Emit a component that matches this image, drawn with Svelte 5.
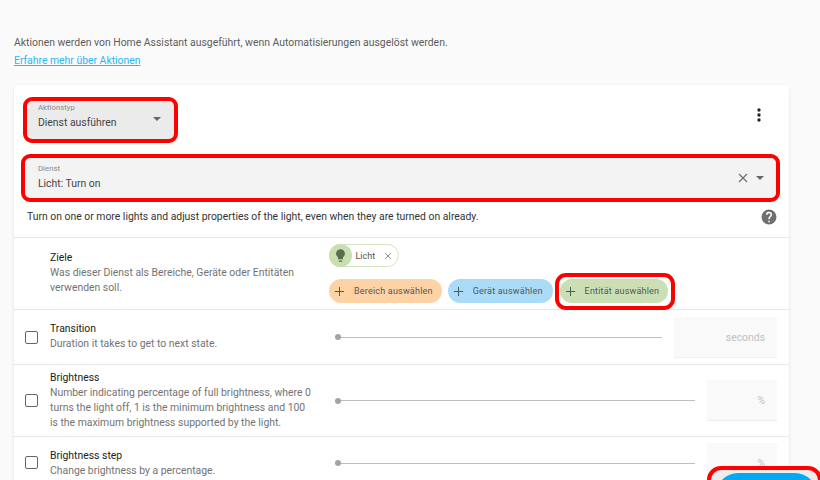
<script>
  const rows = [
    { name: "Transition", desc: "Duration it takes to get to next state.", unit: "seconds", wide: true, cls: "r-transition" },
    { name: "Brightness", desc: "Number indicating percentage of full brightness, where 0 turns the light off, 1 is the minimum brightness and 100 is the maximum brightness supported by the light.", unit: "%", cls: "r-brightness" },
    { name: "Brightness step", desc: "Change brightness by a percentage.", unit: "%", cls: "r-step" }
  ];
  const pickers = [
    { label: "Bereich auswählen", cls: "orange" },
    { label: "Gerät auswählen", cls: "blue" },
    { label: "Entität auswählen", cls: "green" }
  ];
</script>

<div class="page">
  <p class="intro">Aktionen werden von Home Assistant ausgeführt, wenn Automatisierungen ausgelöst werden.</p>
  <a class="learn" href="#top">Erfahre mehr über Aktionen</a>

  <div class="card">
    <div class="head">
      <div class="field type mark">
        <div class="field-text">
          <span class="float">Aktionstyp</span>
          <span class="value">Dienst ausführen</span>
        </div>
        <span class="caret"></span>
      </div>
      <svg class="dots" viewBox="0 0 24 24" width="20" height="20"><path fill="#212121" d="M12 16a2 2 0 1 1 0 4 2 2 0 0 1 0-4zm0-6a2 2 0 1 1 0 4 2 2 0 0 1 0-4zm0-6a2 2 0 1 1 0 4 2 2 0 0 1 0-4z"/></svg>
    </div>

    <div class="field service mark">
      <div class="field-text">
        <span class="float">Dienst</span>
        <span class="value">Licht: Turn on</span>
      </div>
      <svg class="clear" viewBox="0 0 12 12" width="12" height="12"><path d="M2 2l8 8M10 2l-8 8" stroke="#6f6f6f" stroke-width="1.2" fill="none"/></svg>
      <span class="caret"></span>
    </div>

    <div class="help">
      <span>Turn on one or more lights and adjust properties of the light, even when they are turned on already.</span>
      <svg viewBox="0 0 24 24" width="18" height="18"><path fill="#707070" d="M15.07 11.25l-.9.92C13.45 12.89 13 13.5 13 15h-2v-.5c0-1.11.45-2.11 1.17-2.83l1.24-1.26c.37-.36.59-.86.59-1.41a2 2 0 0 0-4 0H8a4 4 0 0 1 8 0c0 .88-.36 1.67-.93 2.25zM13 19h-2v-2h2zM12 2a10 10 0 1 0 0 20 10 10 0 0 0 0-20z"/></svg>
    </div>

    <div class="row targets">
      <div class="label">
        <div class="name">Ziele</div>
        <div class="desc">Was dieser Dienst als Bereiche, Geräte oder Entitäten verwenden soll.</div>
      </div>
      <div class="target-col">
        <div class="chip">
          <span class="chip-icon">
            <svg viewBox="0 0 24 24" width="15" height="15"><path fill="#5c6b50" d="M12 2a7 7 0 0 0-4 12.7V17a1 1 0 0 0 1 1h6a1 1 0 0 0 1-1v-2.3A7 7 0 0 0 12 2zM9 21a1 1 0 0 0 1 1h4a1 1 0 0 0 1-1v-1H9z"/></svg>
          </span>
          <span class="chip-text">Licht</span>
          <svg viewBox="0 0 10 10" width="8" height="8"><path d="M1.5 1.5l7 7M8.5 1.5l-7 7" stroke="#6f6f6f" stroke-width="1" fill="none"/></svg>
        </div>
        <div class="pickers">
          {#each pickers as p}
            <div class="pick-wrap" class:mark={p.cls === "green"}>
              <div class="pick {p.cls}">
                <svg viewBox="0 0 12 12" width="11" height="11"><path d="M6 1v10M1 6h10" stroke="#4d5a5a" stroke-width="1.1" fill="none"/></svg>
                <span>{p.label}</span>
              </div>
            </div>
          {/each}
        </div>
      </div>
    </div>

    {#each rows as r}
      <div class="row {r.cls}">
        <span class="check"></span>
        <div class="label">
          <div class="name">{r.name}</div>
          <div class="desc">{r.desc}</div>
        </div>
        <div class="slider">
          <span class="thumb"></span>
          <span class="track"></span>
        </div>
        <div class="num" class:wide={r.wide}>{r.unit}</div>
      </div>
    {/each}
  </div>

  <div class="fab-mark"><div class="fab"></div></div>
</div>

<style>
  :global(body) {
    margin: 0;
    background: #fafafa;
    overflow: hidden;
  }

  .page {
    position: relative;
    width: 820px;
    height: 480px;
    overflow: hidden;
    box-sizing: border-box;
    padding: 36px 0 0 14px;
    font-family: Roboto, "Liberation Sans", sans-serif;
    color: #212121;
  }

  .intro {
    margin: 0;
    font-size: 10.42px;
    line-height: 13px;
    color: #5c5c5c;
  }

  .learn {
    display: block;
    margin-top: 5px;
    font-size: 10.4px;
    line-height: 13px;
    color: #29b6f6;
  }

  .card {
    width: 775px;
    margin-top: 18px;
    background: #fff;
    border-radius: 4px;
    box-shadow: 0 1px 3px rgba(0, 0, 0, 0.12);
  }

  .mark {
    border: 4px solid #f00;
    border-radius: 9px;
    box-sizing: border-box;
  }

  .head {
    display: flex;
    justify-content: space-between;
    align-items: flex-start;
    padding: 12px 20px 0 9px;
  }

  .dots {
    margin-top: 8px;
  }

  .field {
    display: flex;
    align-items: center;
    background: #efefef;
  }

  .type {
    width: 155px;
    height: 46px;
    padding: 0 13px 0 11px;
    background: #ebebeb;
  }

  .type .field-text {
    margin-bottom: 7px;
  }

  .type .caret {
    margin-bottom: 2px;
  }

  .service {
    width: 759px;
    height: 48px;
    margin: 11px 0 0 7px;
    padding: 0 12px 0 13px;
    background: #f3f3f3;
  }

  .service .field-text {
    margin-bottom: 2px;
  }

  .field-text {
    flex: 1;
    display: flex;
    flex-direction: column;
  }

  .float {
    font-size: 7.8px;
    line-height: 10px;
    color: #8a8a8a;
  }

  .value {
    margin-top: 3px;
    font-size: 10.4px;
    line-height: 14px;
    color: #444;
  }

  .caret {
    width: 0;
    height: 0;
    border-left: 4px solid transparent;
    border-right: 4px solid transparent;
    border-top: 4px solid #666;
  }

  .clear {
    margin-right: 7px;
  }

  .help {
    display: flex;
    align-items: center;
    justify-content: space-between;
    height: 35px;
    padding: 0 11px 6px 13px;
    font-size: 10.4px;
    color: #333;
    box-sizing: border-box;
  }

  .row {
    display: flex;
    align-items: center;
    border-top: 1px solid #e8e8e8;
    box-sizing: border-box;
  }

  .row .label {
    padding-bottom: 2px;
  }

  .targets {
    height: 72px;
    padding-left: 36px;
  }

  .r-transition {
    height: 55px;
  }

  .r-brightness {
    height: 72px;
  }

  .r-step {
    height: 60px;
    align-items: flex-start;
    padding-top: 11px;
  }

  .r-step .check {
    margin-top: 8px;
  }

  .r-step .slider {
    margin-top: 12px;
  }

  .r-step .num {
    margin-top: -5px;
  }

  .check {
    width: 11px;
    height: 11px;
    margin: 0 12px 0 11px;
    border: 1.5px solid #666;
    border-radius: 2px;
    flex: none;
  }

  .label {
    width: 264px;
    flex: none;
  }

  .name {
    font-size: 10.4px;
    line-height: 15px;
    color: #212121;
  }

  .desc {
    font-size: 10.4px;
    line-height: 15px;
    color: #737373;
  }

  .target-col {
    align-self: flex-start;
    margin: 6px 0 0 15px;
  }

  .chip {
    display: inline-flex;
    align-items: center;
    width: 70px;
    height: 23px;
    box-sizing: border-box;
    border: 1.5px solid #d5e4c4;
    border-radius: 12px;
    font-size: 9px;
    color: #555;
    vertical-align: top;
  }

  .chip-icon {
    display: flex;
    align-items: center;
    justify-content: center;
    width: 23px;
    height: 23px;
    margin: 0 4px 0 -1.5px;
    border-radius: 50%;
    background: #c8e0b0;
    flex: none;
  }

  .chip-text {
    margin-right: 9px;
  }

  .pickers {
    display: flex;
    align-items: flex-start;
    margin-top: 12px;
    gap: 6px;
  }

  .pick-wrap.mark {
    padding: 2px 3px 3px 1px;
    margin: -6px 0 -7px -4px;
    border-radius: 11px;
  }

  .pick {
    display: flex;
    align-items: center;
    gap: 9px;
    height: 24px;
    padding: 0 9px 0 5px;
    border-radius: 12px;
    font-size: 9px;
    letter-spacing: 0.2px;
    color: #555;
    white-space: nowrap;
  }

  .orange {
    background: #fdd3a5;
  }

  .blue {
    padding-right: 10px;
    background: #aadcf7;
  }

  .green {
    background: #cbdfb4;
  }

  .slider {
    position: relative;
    display: flex;
    align-items: center;
    flex: 1;
    margin-left: 21px;
    height: 6px;
  }

  .thumb {
    width: 6px;
    height: 6px;
    border-radius: 50%;
    background: #a3a3a3;
    flex: none;
  }

  .track {
    flex: 1;
    height: 1px;
    background: #bdbdbd;
  }

  .num {
    width: 70px;
    height: 41px;
    margin: 0 12px;
    padding-right: 12px;
    box-sizing: border-box;
    background: #f9f9f9;
    border-bottom: 1px solid #efefef;
    text-align: right;
    line-height: 41px;
    font-size: 10.4px;
    color: #c0c0c0;
    flex: none;
  }

  .num.wide {
    width: 103px;
  }

  .fab-mark {
    position: absolute;
    left: 707px;
    top: 466px;
    width: 115px;
    height: 60px;
    box-sizing: border-box;
    padding: 3px 1px 0 5px;
    border: 4px solid #f00;
    border-radius: 14px;
    background: #ececec;
  }

  .fab {
    height: 44px;
    border-radius: 22px;
    background: #03a9f4;
  }
</style>
